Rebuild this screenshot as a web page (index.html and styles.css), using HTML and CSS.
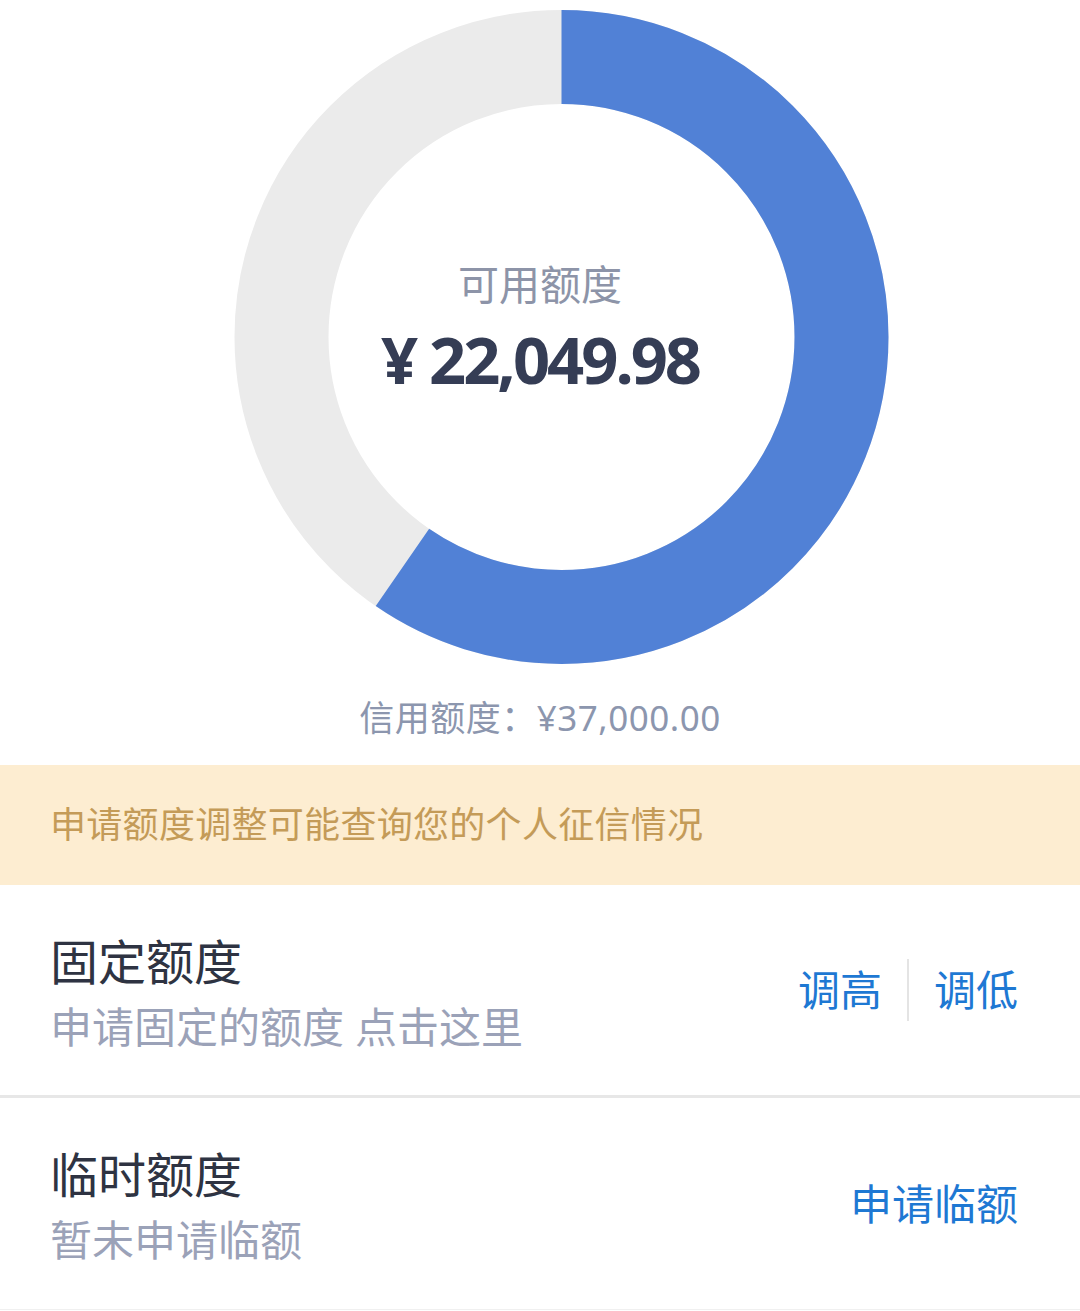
FILE: index.html
```html
<!DOCTYPE html>
<html lang="zh-CN">
<head>
    <meta charset="UTF-8">
    <meta name="viewport" content="width=device-width, initial-scale=1.0">
    <title>额度管理</title>
    <link rel="stylesheet" href="styles.css">
</head>
<body>
    <div class="chart">
        <svg class="donut" width="1080" height="680" viewBox="0 0 1080 680">
            <circle cx="561.5" cy="337" r="280" fill="none" stroke="#ebebeb" stroke-width="94"/>
            <circle cx="561.5" cy="337" r="280" fill="none" stroke="#5181d6" stroke-width="94"
                    stroke-dasharray="1048.4 1759.3" transform="rotate(-90 561.5 337)"/>
        </svg>
        <div class="chart-center">
            <div class="chart-label">可用额度</div>
            <div class="chart-amount">¥ 22,049.98</div>
        </div>
    </div>
    <div class="credit">信用额度：¥37,000.00</div>

    <div class="notice">申请额度调整可能查询您的个人征信情况</div>

    <div class="row">
        <div class="row-text">
            <div class="row-title">固定额度</div>
            <div class="row-sub">申请固定的额度 点击这里</div>
        </div>
        <div class="row-actions">
            <a class="action">调高</a>
            <span class="divider"></span>
            <a class="action">调低</a>
        </div>
    </div>
    <div class="row row-last">
        <div class="row-text">
            <div class="row-title">临时额度</div>
            <div class="row-sub">暂未申请临额</div>
        </div>
        <div class="row-actions">
            <a class="action">申请临额</a>
        </div>
    </div>
</body>
</html>
```

FILE: styles.css
```css
body {
    font-family: "Noto Sans", "Noto Sans CJK SC", sans-serif;
    background-color: #fff;
    margin: 0;
    width: 1080px;
}
.chart {
    position: relative;
    height: 694px;
}
.donut {
    display: block;
}
.chart-center {
    position: absolute;
    top: 252px;
    left: 0;
    right: 0;
    text-align: center;
}
.chart-label {
    font-size: 41px;
    line-height: 64px;
    color: #8d94a8;
}
.chart-amount {
    font-size: 65px;
    line-height: 86px;
    font-weight: 700;
    color: #353d55;
    letter-spacing: -3px;
}
.credit {
    text-align: center;
    font-size: 35px;
    line-height: 48px;
    color: #8c96ae;
    letter-spacing: 0.5px;
}
.notice {
    margin-top: 23px;
    height: 120px;
    line-height: 120px;
    padding-left: 50px;
    background-color: #fdedd1;
    color: #c49b58;
    font-size: 36px;
    letter-spacing: 0.3px;
}
.row {
    display: flex;
    align-items: center;
    justify-content: space-between;
    height: 210px;
    padding: 0 62px 0 50px;
    border-bottom: 3px solid #e7e7e7;
}
.row-last {
    height: 211px;
    border-bottom: 1px solid #f0f0f0;
}
.row-text {
    padding-top: 7px;
}
.row-title {
    font-size: 48px;
    line-height: 62px;
    color: #2e3342;
}
.row-sub {
    margin-top: 4px;
    font-size: 42px;
    line-height: 60px;
    color: #9ba2b8;
}
.row-actions {
    display: flex;
    align-items: center;
}
.action {
    font-size: 42px;
    line-height: 60px;
    color: #1e78d3;
}
.divider {
    width: 2px;
    height: 62px;
    margin: 0 25px;
    background-color: #e4e4e4;
}
```
